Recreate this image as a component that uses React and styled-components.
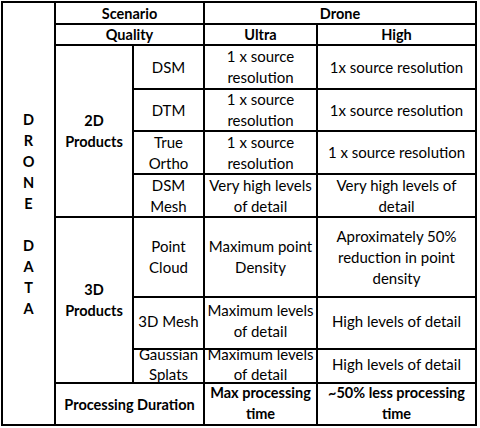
import React from "react";
import styled, { createGlobalStyle } from "styled-components";

const Global = createGlobalStyle`
  html, body { margin: 0; padding: 0; background: #fff; }
  body { font-family: Lato, "Open Sans", sans-serif; color: #000; }
`;

const Page = styled.div`
  padding: 1px;
  width: 480px;
  height: 428px;
  box-sizing: border-box;
  background: #fff;
`;

const Table = styled.div`
  display: grid;
  width: 476px;
  box-sizing: border-box;
  grid-template-columns: 53px 78px 71px 113px 159px;
  grid-template-rows: 22px 21px 44px 42px 43px 43px 80px 52px 34px 42px;
  border-left: 2px solid #000;
  border-top: 2px solid #000;
`;

const Cell = styled.div`
  grid-column: ${(p) => p.$col};
  grid-row: ${(p) => p.$row};
  box-sizing: border-box;
  border-right: 2px solid #000;
  border-bottom: 2px solid #000;
  display: flex;
  align-items: center;
  justify-content: center;
  text-align: center;
  white-space: nowrap;
  font-size: ${(p) => (p.$bold ? 14.5 : 15)}px;
  line-height: ${(p) => p.$lh || 21}px;
  font-weight: ${(p) => (p.$bold ? 700 : 400)};
  padding-bottom: ${(p) => p.$nudge || 0}px;
`;

const Letters = styled.div`
  display: flex;
  flex-direction: column;
  align-items: center;
`;

const Letter = styled.span`
  height: 21px;
  line-height: 21px;
  font-size: 14.5px;
  font-weight: 700;
`;

const letters = ["D", "R", "O", "N", "E", "\u00a0", "D", "A", "T", "A"];

const L = ({ children }) =>
  children.split("\n").map((line, i, arr) => (
    <React.Fragment key={i}>
      {line}
      {i < arr.length - 1 && <br />}
    </React.Fragment>
  ));

export default function App() {
  return (
    <Page>
      <Global />
      <Table>
        <Cell $col="1" $row="1 / span 10">
          <Letters>
            {letters.map((c, i) => (
              <Letter key={i}>{c}</Letter>
            ))}
          </Letters>
        </Cell>

        <Cell $col="2 / span 2" $row="1" $bold>Scenario</Cell>
        <Cell $col="4 / span 2" $row="1" $bold>Drone</Cell>

        <Cell $col="2 / span 2" $row="2" $bold>Quality</Cell>
        <Cell $col="4" $row="2" $bold>Ultra</Cell>
        <Cell $col="5" $row="2" $bold>High</Cell>

        <Cell $col="2" $row="3 / span 4" $bold><div><L>{"2D\nProducts"}</L></div></Cell>
        <Cell $col="3" $row="3">DSM</Cell>
        <Cell $col="4" $row="3"><div><L>{"1 x source\nresolution"}</L></div></Cell>
        <Cell $col="5" $row="3">1x source resolution</Cell>

        <Cell $col="3" $row="4">DTM</Cell>
        <Cell $col="4" $row="4"><div><L>{"1 x source\nresolution"}</L></div></Cell>
        <Cell $col="5" $row="4">1x source resolution</Cell>

        <Cell $col="3" $row="5"><div><L>{"True\nOrtho"}</L></div></Cell>
        <Cell $col="4" $row="5"><div><L>{"1 x source\nresolution"}</L></div></Cell>
        <Cell $col="5" $row="5">1 x source resolution</Cell>

        <Cell $col="3" $row="6"><div><L>{"DSM\nMesh"}</L></div></Cell>
        <Cell $col="4" $row="6"><div><L>{"Very high levels\nof detail"}</L></div></Cell>
        <Cell $col="5" $row="6"><div><L>{"Very high levels of\ndetail"}</L></div></Cell>

        <Cell $col="2" $row="7 / span 3" $bold><div><L>{"3D\nProducts"}</L></div></Cell>
        <Cell $col="3" $row="7"><div><L>{"Point\nCloud"}</L></div></Cell>
        <Cell $col="4" $row="7"><div><L>{"Maximum point\nDensity"}</L></div></Cell>
        <Cell $col="5" $row="7"><div><L>{"Aproximately 50%\nreduction in point\ndensity"}</L></div></Cell>

        <Cell $col="3" $row="8" $nudge={4}>3D Mesh</Cell>
        <Cell $col="4" $row="8" $nudge={4}><div><L>{"Maximum levels\nof detail"}</L></div></Cell>
        <Cell $col="5" $row="8" $nudge={4}>High levels of detail</Cell>

        <Cell $col="3" $row="9" $lh={20} $nudge={4}><div><L>{"Gaussian\nSplats"}</L></div></Cell>
        <Cell $col="4" $row="9" $lh={20} $nudge={4}><div><L>{"Maximum levels\nof detail"}</L></div></Cell>
        <Cell $col="5" $row="9" $nudge={4}>High levels of detail</Cell>

        <Cell $col="2 / span 2" $row="10" $bold>Processing Duration</Cell>
        <Cell $col="4" $row="10" $bold $nudge={2}><div><L>{"Max processing\ntime"}</L></div></Cell>
        <Cell $col="5" $row="10" $bold $nudge={2}><div><L>{"~50% less processing\ntime"}</L></div></Cell>
      </Table>
    </Page>
  );
}
